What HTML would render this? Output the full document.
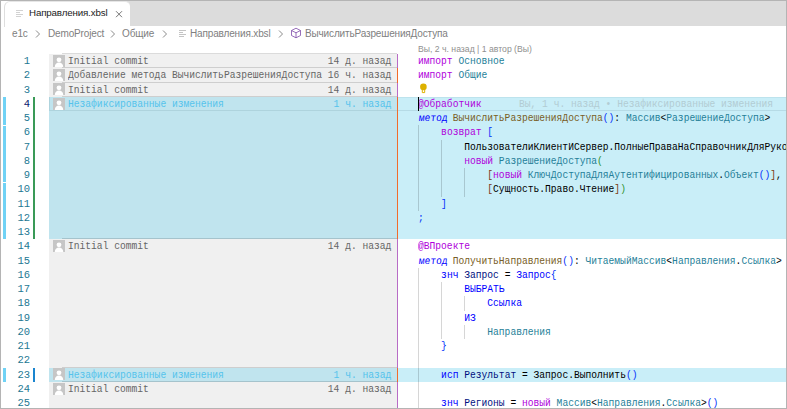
<!DOCTYPE html>
<html><head><meta charset="utf-8"><style>
*{margin:0;padding:0;box-sizing:border-box}
html,body{width:787px;height:409px;overflow:hidden;background:#fff}
body{position:relative;font-family:"Liberation Sans",sans-serif}
.a{position:absolute}
.m{font-family:"Liberation Mono",monospace;white-space:pre}
.ln{position:absolute;left:0;width:30px;text-align:right;font-family:"Liberation Mono",monospace;font-size:10.5px;color:#237893;line-height:14.25px}
.cl{position:absolute;left:418px;white-space:pre;font-family:"Liberation Mono",monospace;font-size:10.5px;line-height:14.25px;transform-origin:0 0}
.br{position:absolute;top:0;font-size:10px;letter-spacing:-0.15px;color:#808080;line-height:14px;white-space:pre}
.brow{position:absolute;left:49px;width:348px}
</style></head><body>

<div class="a" style="left:118px;top:1px;width:668px;height:25px;background:#dcdcdc"></div>
<div class="a" style="left:4px;top:1px;width:126px;height:26px;background:#fff;border-left:1px solid #dedede;border-top:1px solid #e6e6e6;border-top-left-radius:6px;border-top-right-radius:5px"></div>
<div class="a" style="left:16px;top:10px;width:7px;height:1px;background:#d2d2d2"></div>
<div class="a" style="left:16px;top:12px;width:4px;height:1px;background:#d2d2d2"></div>
<div class="a" style="left:16px;top:14px;width:7px;height:1px;background:#d2d2d2"></div>
<div class="a" style="left:16px;top:16px;width:5px;height:1px;background:#d2d2d2"></div>
<div class="br" style="left:29px;top:6px;color:#222;font-size:9.75px">Направления.xbsl</div>
<svg class="a" style="left:115px;top:10px" width="8" height="8" viewBox="0 0 8 8"><path d="M1 1.2L7 7.2M7 1.2L1 7.2" stroke="#666" stroke-width="0.9"/></svg>
<div class="br" style="left:12px;top:27px">e1c</div>
<svg class="a" style="left:35px;top:30px" width="6" height="8" viewBox="0 0 6 8"><path d="M1 0.5L4.5 4L1 7.5" stroke="#8a8a8a" stroke-width="1" fill="none"/></svg>
<div class="br" style="left:48px;top:27px">DemoProject</div>
<svg class="a" style="left:110px;top:30px" width="6" height="8" viewBox="0 0 6 8"><path d="M1 0.5L4.5 4L1 7.5" stroke="#8a8a8a" stroke-width="1" fill="none"/></svg>
<div class="br" style="left:122px;top:27px">Общие</div>
<svg class="a" style="left:162px;top:30px" width="6" height="8" viewBox="0 0 6 8"><path d="M1 0.5L4.5 4L1 7.5" stroke="#8a8a8a" stroke-width="1" fill="none"/></svg>
<div class="a" style="left:179px;top:30px;width:7px;height:1px;background:#c4c4c4"></div>
<div class="a" style="left:179px;top:32px;width:4px;height:1px;background:#c4c4c4"></div>
<div class="a" style="left:179px;top:34px;width:7px;height:1px;background:#c4c4c4"></div>
<div class="a" style="left:179px;top:36px;width:5px;height:1px;background:#c4c4c4"></div>
<div class="br" style="left:190px;top:27px">Направления.xbsl</div>
<svg class="a" style="left:278px;top:30px" width="6" height="8" viewBox="0 0 6 8"><path d="M1 0.5L4.5 4L1 7.5" stroke="#8a8a8a" stroke-width="1" fill="none"/></svg>
<svg class="a" style="left:290px;top:27px" width="12" height="12" viewBox="0 0 12 12"><path d="M6 1.2L10.5 3.5V8.5L6 10.8L1.5 8.5V3.5Z M1.5 3.5L6 5.8L10.5 3.5 M6 5.8V10.8" stroke="#7d4aa8" stroke-width="0.8" fill="none"/></svg>
<div class="br" style="left:305px;top:27px">ВычислитьРазрешенияДоступа</div>
<div class="a" style="left:418px;top:42.6px;font-size:9.75px;color:#8f8f8f;white-space:pre;line-height:12px;transform:scaleX(0.888);transform-origin:0 0">Вы, 2 ч. назад | 1 автор (Вы)</div>
<div class="a" style="left:3px;top:97px;width:3px;height:28px;background:#70d2f5"></div>
<div class="a" style="left:3px;top:126px;width:3px;height:56px;background:#70d2f5"></div>
<div class="a" style="left:3px;top:183px;width:3px;height:56px;background:#70d2f5"></div>
<div class="a" style="left:3px;top:368px;width:3px;height:14px;background:#70d2f5"></div>
<div class="a" style="left:33px;top:97px;width:2px;height:142px;background:#3a9a57"></div>
<div class="a" style="left:33px;top:368px;width:2px;height:14px;background:#1a85cf"></div>
<div class="ln" style="top:54.10px">1</div>
<div class="ln" style="top:68.35px">2</div>
<div class="ln" style="top:82.60px">3</div>
<div class="ln" style="top:96.85px;color:#0b216f">4</div>
<div class="ln" style="top:111.10px">5</div>
<div class="ln" style="top:125.35px">6</div>
<div class="ln" style="top:139.60px">7</div>
<div class="ln" style="top:153.85px">8</div>
<div class="ln" style="top:168.10px">9</div>
<div class="ln" style="top:182.35px">10</div>
<div class="ln" style="top:196.60px">11</div>
<div class="ln" style="top:210.85px">12</div>
<div class="ln" style="top:225.10px">13</div>
<div class="ln" style="top:239.35px">14</div>
<div class="ln" style="top:253.60px">15</div>
<div class="ln" style="top:267.85px">16</div>
<div class="ln" style="top:282.10px">17</div>
<div class="ln" style="top:296.35px">18</div>
<div class="ln" style="top:310.60px">19</div>
<div class="ln" style="top:324.85px">20</div>
<div class="ln" style="top:339.10px">21</div>
<div class="ln" style="top:353.35px">22</div>
<div class="ln" style="top:367.60px">23</div>
<div class="ln" style="top:381.85px">24</div>
<div class="ln" style="top:396.10px">25</div>
<div class="a" style="left:398px;top:96.75px;width:388px;height:142.5px;background:#c9eef8"></div>
<div class="a" style="left:398px;top:109.75px;width:388px;height:1px;background:#b6dbe6"></div>
<div class="a" style="left:398px;top:97px;width:388px;height:1px;background:#bde3ed"></div>
<div class="a" style="left:398px;top:367.5px;width:388px;height:14.25px;background:#c9eef8"></div>
<div class="brow a" style="top:54.00px;height:14.25px;background:#f0f0f0"></div>
<div class="brow a" style="top:68.25px;height:14.25px;background:#f0f0f0"></div>
<div class="brow a" style="top:82.50px;height:14.25px;background:#f0f0f0"></div>
<div class="brow a" style="top:96.75px;height:14.25px;background:#c0e4ee"></div>
<div class="brow a" style="top:111.00px;height:14.25px;background:#c0e4ee"></div>
<div class="brow a" style="top:125.25px;height:14.25px;background:#c0e4ee"></div>
<div class="brow a" style="top:139.50px;height:14.25px;background:#c0e4ee"></div>
<div class="brow a" style="top:153.75px;height:14.25px;background:#c0e4ee"></div>
<div class="brow a" style="top:168.00px;height:14.25px;background:#c0e4ee"></div>
<div class="brow a" style="top:182.25px;height:14.25px;background:#c0e4ee"></div>
<div class="brow a" style="top:196.50px;height:14.25px;background:#c0e4ee"></div>
<div class="brow a" style="top:210.75px;height:14.25px;background:#c0e4ee"></div>
<div class="brow a" style="top:225.00px;height:14.25px;background:#c0e4ee"></div>
<div class="brow a" style="top:239.25px;height:14.25px;background:#f0f0f0"></div>
<div class="brow a" style="top:253.50px;height:14.25px;background:#f0f0f0"></div>
<div class="brow a" style="top:267.75px;height:14.25px;background:#f0f0f0"></div>
<div class="brow a" style="top:282.00px;height:14.25px;background:#f0f0f0"></div>
<div class="brow a" style="top:296.25px;height:14.25px;background:#f0f0f0"></div>
<div class="brow a" style="top:310.50px;height:14.25px;background:#f0f0f0"></div>
<div class="brow a" style="top:324.75px;height:14.25px;background:#f0f0f0"></div>
<div class="brow a" style="top:339.00px;height:14.25px;background:#f0f0f0"></div>
<div class="brow a" style="top:353.25px;height:14.25px;background:#f0f0f0"></div>
<div class="brow a" style="top:367.50px;height:14.25px;background:#c0e4ee"></div>
<div class="brow a" style="top:381.75px;height:14.25px;background:#f0f0f0"></div>
<div class="brow a" style="top:396.00px;height:14.25px;background:#f0f0f0"></div>
<div class="a" style="left:62px;top:53.00px;width:335px;height:1px;background:rgba(0,0,0,0.14)"></div>
<svg class="a" style="left:53px;top:55px" width="12" height="12" viewBox="0 0 12 12"><rect width="12" height="12" fill="#c6c6c6"/><circle cx="6" cy="4.8" r="2.4" fill="#fff"/><path d="M1.8 12C1.8 9.2 3.6 7.6 6 7.6S10.2 9.2 10.2 12Z" fill="#fff"/></svg>
<div class="cl" style="left:68px;top:54.10px;color:#666666;transform:scaleX(0.9163)">Initial commit                               14 д. назад</div>
<div class="a" style="left:62px;top:67.25px;width:335px;height:1px;background:rgba(0,0,0,0.14)"></div>
<svg class="a" style="left:53px;top:69px" width="12" height="12" viewBox="0 0 12 12"><rect width="12" height="12" fill="#c6c6c6"/><circle cx="6" cy="4.8" r="2.4" fill="#fff"/><path d="M1.8 12C1.8 9.2 3.6 7.6 6 7.6S10.2 9.2 10.2 12Z" fill="#fff"/></svg>
<div class="cl" style="left:68px;top:68.35px;color:#666666;transform:scaleX(0.9163)">Добавление метода ВычислитьРазрешенияДоступа 16 ч. назад</div>
<div class="a" style="left:62px;top:81.50px;width:335px;height:1px;background:rgba(0,0,0,0.14)"></div>
<svg class="a" style="left:53px;top:83px" width="12" height="12" viewBox="0 0 12 12"><rect width="12" height="12" fill="#c6c6c6"/><circle cx="6" cy="4.8" r="2.4" fill="#fff"/><path d="M1.8 12C1.8 9.2 3.6 7.6 6 7.6S10.2 9.2 10.2 12Z" fill="#fff"/></svg>
<div class="cl" style="left:68px;top:82.60px;color:#666666;transform:scaleX(0.9163)">Initial commit                               14 д. назад</div>
<div class="a" style="left:62px;top:95.75px;width:335px;height:1px;background:rgba(0,0,0,0.14)"></div>
<svg class="a" style="left:53px;top:98px" width="12" height="12" viewBox="0 0 12 12"><rect width="12" height="12" fill="#c6c6c6"/><circle cx="6" cy="4.8" r="2.4" fill="#fff"/><path d="M1.8 12C1.8 9.2 3.6 7.6 6 7.6S10.2 9.2 10.2 12Z" fill="#fff"/></svg>
<div class="cl" style="left:68px;top:96.85px;color:#55c3ec;transform:scaleX(0.9163)">Незафиксированные изменения                   1 ч. назад</div>
<div class="a" style="left:62px;top:238.25px;width:335px;height:1px;background:rgba(0,0,0,0.14)"></div>
<svg class="a" style="left:53px;top:240px" width="12" height="12" viewBox="0 0 12 12"><rect width="12" height="12" fill="#c6c6c6"/><circle cx="6" cy="4.8" r="2.4" fill="#fff"/><path d="M1.8 12C1.8 9.2 3.6 7.6 6 7.6S10.2 9.2 10.2 12Z" fill="#fff"/></svg>
<div class="cl" style="left:68px;top:239.35px;color:#666666;transform:scaleX(0.9163)">Initial commit                               14 д. назад</div>
<div class="a" style="left:62px;top:366.50px;width:335px;height:1px;background:rgba(0,0,0,0.14)"></div>
<svg class="a" style="left:53px;top:368px" width="12" height="12" viewBox="0 0 12 12"><rect width="12" height="12" fill="#c6c6c6"/><circle cx="6" cy="4.8" r="2.4" fill="#fff"/><path d="M1.8 12C1.8 9.2 3.6 7.6 6 7.6S10.2 9.2 10.2 12Z" fill="#fff"/></svg>
<div class="cl" style="left:68px;top:367.60px;color:#55c3ec;transform:scaleX(0.9163)">Незафиксированные изменения                   1 ч. назад</div>
<div class="a" style="left:62px;top:380.75px;width:335px;height:1px;background:rgba(0,0,0,0.14)"></div>
<svg class="a" style="left:53px;top:383px" width="12" height="12" viewBox="0 0 12 12"><rect width="12" height="12" fill="#c6c6c6"/><circle cx="6" cy="4.8" r="2.4" fill="#fff"/><path d="M1.8 12C1.8 9.2 3.6 7.6 6 7.6S10.2 9.2 10.2 12Z" fill="#fff"/></svg>
<div class="cl" style="left:68px;top:381.85px;color:#666666;transform:scaleX(0.9163)">Initial commit                               14 д. назад</div>
<div class="a" style="left:49px;top:96.75px;width:348px;height:14.25px;border-left:1px solid #aed3dd;border-bottom:1px solid #aed3dd"></div>
<div class="a" style="left:397px;top:54.00px;width:1px;height:14.25px;background:#b86cc6"></div>
<div class="a" style="left:397px;top:68.25px;width:1px;height:14.25px;background:#f26b2a"></div>
<div class="a" style="left:397px;top:82.50px;width:1px;height:14.25px;background:#b86cc6"></div>
<div class="a" style="left:397px;top:96.75px;width:1px;height:142.50px;background:#f26b2a"></div>
<div class="a" style="left:397px;top:239.25px;width:1px;height:128.25px;background:#b86cc6"></div>
<div class="a" style="left:397px;top:367.50px;width:1px;height:14.25px;background:#f26b2a"></div>
<div class="a" style="left:397px;top:381.75px;width:1px;height:28.50px;background:#b86cc6"></div>
<div class="a" style="left:418px;top:125.25px;width:1px;height:85.50px;background:rgba(0,0,0,0.16)"></div>
<div class="a" style="left:441px;top:139.50px;width:1px;height:57.00px;background:rgba(0,0,0,0.16)"></div>
<div class="a" style="left:464px;top:168.00px;width:1px;height:28.50px;background:rgba(0,0,0,0.16)"></div>
<div class="a" style="left:418px;top:267.75px;width:1px;height:142.50px;background:rgba(0,0,0,0.16)"></div>
<div class="a" style="left:441px;top:282.00px;width:1px;height:57.00px;background:rgba(0,0,0,0.16)"></div>
<div class="a" style="left:464px;top:296.25px;width:1px;height:14.25px;background:rgba(0,0,0,0.16)"></div>
<div class="a" style="left:464px;top:324.75px;width:1px;height:14.25px;background:rgba(0,0,0,0.16)"></div>
<div class="cl" style="top:54.10px;transform:scaleX(0.9163)"><span style="color:#af00db;">импорт</span> <span style="color:#267f99;">Основное</span></div>
<div class="cl" style="top:68.35px;transform:scaleX(0.9163)"><span style="color:#af00db;">импорт</span> <span style="color:#267f99;">Общие</span></div>
<div class="cl" style="top:96.85px;transform:scaleX(0.9163)"><span style="color:#af00db;">@Обработчик</span></div>
<div class="cl" style="top:111.10px;transform:scaleX(0.9163)"><span style="color:#0000ff;display:inline-block;transform:skewX(-7deg);transform-origin:0 100%;">метод</span> <span style="color:#795e26;">ВычислитьРазрешенияДоступа</span><span style="color:#0431fa;">()</span><span style="color:#000000;">: </span><span style="color:#267f99;">Массив</span><span style="color:#000000;">&lt;</span><span style="color:#267f99;">РазрешениеДоступа</span><span style="color:#000000;">&gt;</span></div>
<div class="cl" style="top:125.35px;transform:scaleX(0.9163)">    <span style="color:#af00db;">возврат</span> <span style="color:#0431fa;">[</span></div>
<div class="cl" style="top:139.60px;transform:scaleX(0.9163)">        <span style="color:#000000;">ПользователиКлиентИСервер</span><span style="color:#000000;">.</span><span style="color:#000000;">ПолныеПраваНаСправочникДляРуководителей</span></div>
<div class="cl" style="top:153.85px;transform:scaleX(0.9163)">        <span style="color:#af00db;">новый</span> <span style="color:#267f99;">РазрешениеДоступа</span><span style="color:#319331;">(</span></div>
<div class="cl" style="top:168.10px;transform:scaleX(0.9163)">            <span style="color:#7b3814;">[</span><span style="color:#af00db;">новый</span> <span style="color:#267f99;">КлючДоступаДляАутентифицированных</span><span style="color:#000000;">.</span><span style="color:#267f99;">Объект</span><span style="color:#0431fa;">()</span><span style="color:#7b3814;">]</span><span style="color:#000000;">,</span></div>
<div class="cl" style="top:182.35px;transform:scaleX(0.9163)">            <span style="color:#7b3814;">[</span><span style="color:#000000;">Сущность</span><span style="color:#000000;">.</span><span style="color:#000000;">Право</span><span style="color:#000000;">.</span><span style="color:#000000;">Чтение</span><span style="color:#7b3814;">]</span><span style="color:#319331;">)</span></div>
<div class="cl" style="top:196.60px;transform:scaleX(0.9163)">    <span style="color:#0431fa;">]</span></div>
<div class="cl" style="top:210.85px;transform:scaleX(0.9163)"><span style="color:#0431fa;">;</span></div>
<div class="cl" style="top:239.35px;transform:scaleX(0.9163)"><span style="color:#af00db;">@ВПроекте</span></div>
<div class="cl" style="top:253.60px;transform:scaleX(0.9163)"><span style="color:#0000ff;display:inline-block;transform:skewX(-7deg);transform-origin:0 100%;">метод</span> <span style="color:#795e26;">ПолучитьНаправления</span><span style="color:#0431fa;">()</span><span style="color:#000000;">: </span><span style="color:#267f99;">ЧитаемыйМассив</span><span style="color:#000000;">&lt;</span><span style="color:#267f99;">Направления</span><span style="color:#000000;">.</span><span style="color:#267f99;">Ссылка</span><span style="color:#000000;">&gt;</span></div>
<div class="cl" style="top:267.85px;transform:scaleX(0.9163)">    <span style="color:#0000ff;">знч</span> <span style="color:#001080;">Запрос</span><span style="color:#000000;"> = </span><span style="color:#0000ff;">Запрос</span><span style="color:#0431fa;">{</span></div>
<div class="cl" style="top:282.10px;transform:scaleX(0.9163)">        <span style="color:#0000ff;">ВЫБРАТЬ</span></div>
<div class="cl" style="top:296.35px;transform:scaleX(0.9163)">            <span style="color:#0000ff;">Ссылка</span></div>
<div class="cl" style="top:310.60px;transform:scaleX(0.9163)">        <span style="color:#0000ff;">ИЗ</span></div>
<div class="cl" style="top:324.85px;transform:scaleX(0.9163)">            <span style="color:#267f99;">Направления</span></div>
<div class="cl" style="top:339.10px;transform:scaleX(0.9163)">    <span style="color:#0431fa;">}</span></div>
<div class="cl" style="top:367.60px;transform:scaleX(0.9163)">    <span style="color:#0000ff;">исп</span> <span style="color:#001080;">Результат</span><span style="color:#000000;"> = </span><span style="color:#000000;">Запрос</span><span style="color:#000000;">.</span><span style="color:#000000;">Выполнить</span><span style="color:#0431fa;">()</span></div>
<div class="cl" style="top:396.10px;transform:scaleX(0.9163)">    <span style="color:#0000ff;">знч</span> <span style="color:#001080;">Регионы</span><span style="color:#000000;"> = </span><span style="color:#af00db;">новый</span> <span style="color:#267f99;">Массив</span><span style="color:#000000;">&lt;</span><span style="color:#267f99;">Направления</span><span style="color:#000000;">.</span><span style="color:#267f99;">Ссылка</span><span style="color:#000000;">&gt;</span><span style="color:#0431fa;">()</span></div>
<div class="cl" style="left:519px;top:96.85px;color:#b2ccd3;transform:scaleX(0.9163)">Вы, 1 ч. назад • Незафиксированные изменения</div>
<div class="a" style="left:418px;top:96.75px;width:1px;height:14px;background:#000"></div>
<svg class="a" style="left:419px;top:83px" width="9" height="11" viewBox="0 0 9 11"><circle cx="4.4" cy="3.9" r="3.3" fill="#ddb100"/><path d="M3.3 6.5V9.6H5.7V6.5" stroke="#ddb100" stroke-width="1" fill="none"/></svg>
<div class="a" style="left:0;top:0;width:787px;height:409px;border:1px solid #b4b4b4"></div>
</body></html>
